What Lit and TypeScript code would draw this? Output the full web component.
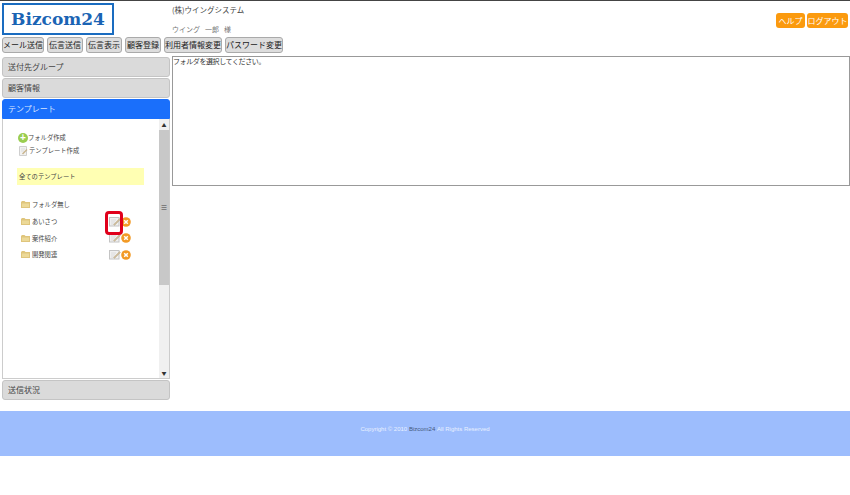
import { LitElement, html, css, svg } from "lit";
import { customElement } from "lit/decorators.js";

const folder = svg`<svg class="fd" viewBox="0 0 9 7" width="9" height="7"><path d="M0 1V7H9V1H4.5L3.5 0H1Z" fill="#dfc57c"/><rect x="1" y="2.5" width="7" height="3.5" fill="#ecd998"/></svg>`;
const edit = html`<svg class="ed" viewBox="0 0 12 10" width="12" height="10"><rect x=".5" y=".5" width="9.5" height="8.5" fill="#f0f0f0" stroke="#c4c4c4"/><path d="M2 3H7M2 5H6M2 7H5" stroke="#dcdcdc"/><path d="M4.5 7.5L10.5 1.5L11.5 2.5L5.5 8.5Z" fill="#cdbb98" stroke="#b5a78c" stroke-width=".4"/></svg>`;
const page = html`<svg class="pg" viewBox="0 0 9 10" width="9" height="10"><path d="M.5 .5H7.5V9.5H.5Z" fill="#f2f2f2" stroke="#cfcfcf"/><path d="M2 3H6M2 5H5" stroke="#ddd"/><path d="M3 7.5L7.5 3L8.5 4L4 8.5Z" fill="#c9b48c"/></svg>`;
const del = html`<svg class="dl" viewBox="0 0 10 10" width="10" height="10"><circle cx="5" cy="5" r="4.8" fill="#f29a26"/><path d="M3.2 3.2L6.8 6.8M6.8 3.2L3.2 6.8" stroke="#fff" stroke-width="1.5"/></svg>`;

@customElement("app-root")
export class AppRoot extends LitElement {
  static styles = css`
    :host { display: block; width: 850px; height: 495px; background: #fff; overflow: hidden;
      font-family: "Noto Sans CJK JP", "Liberation Sans", sans-serif; color: #333; font-size: 8px; }
    .page { height: 495px; border-top: 1px solid #444; box-sizing: border-box; display: flex; flex-direction: column; }
    header { height: 35px; display: flex; padding: 2px 0 0 2px; box-sizing: border-box; flex: none; }
    .logo { width: 112px; height: 32px; box-sizing: border-box; border: 2px solid #1a6cc0; display: flex; align-items: center; justify-content: center;
      font: bold 17px "DejaVu Serif", serif; color: #1a64b4; }
    .co { margin-left: 58px; display: flex; flex-direction: column; gap: 9px; padding-top: 1px; flex: 1; }
    .co div { line-height: 11px; font-size: 7.5px; color: #444; }
    .co .u { color: #777; font-size: 7px; display: flex; gap: 5px; }
    .top { display: flex; gap: 2px; padding: 10px 2px 0 0; align-items: flex-start; }
    .top span { background: #fb9a0e; color: #fff; border-radius: 3px; height: 15px; line-height: 15px; padding: 0 2.5px; font-size: 8px; white-space: nowrap; }
    .top span + span { padding: 0 .5px; }
    nav { display: flex; gap: 3px; padding-left: 2px; height: 16px; flex: none; margin-top: 1px; }
    nav span { background: #ddd; border: 1px solid #aaa; border-radius: 3px; min-width: 36px; box-sizing: border-box; text-align: center; line-height: 14px; font-size: 8px; color: #222; white-space: nowrap; }
    .body { display: flex; margin-top: 3px; height: 345px; flex: none; padding-left: 2px; }
    .side { width: 168px; flex: none; display: flex; flex-direction: column; margin-top: 1px; }
    .h { height: 20px; box-sizing: border-box; background: #dadada; border: 1px solid #c4c4c4; border-radius: 3px; line-height: 18px; padding-left: 5px; font-size: 8px; color: #444; margin-bottom: 1px; flex: none; }
    .h.on { background: #1a6ffb; color: #d8e6ff; border-color: #1a6ffb; border-radius: 3px 3px 0 0; margin-bottom: 0; }
    .panel { height: 260px; flex: none; margin-bottom: 1px; box-sizing: border-box; border: 1px solid #ccc; border-top: 0; display: flex; }
    .list { flex: 1; padding: 12px 0 0 15px; position: relative; font-size: 6.3px; color: #444; }
    .act { display: flex; align-items: center; height: 13px; gap: 0; }
    .pg { margin-left: 1px; margin-right: 1px; }
    .plus { width: 10px; height: 10px; border-radius: 50%; background: #9acd50; color: #fff; font: bold 10px/10px "Liberation Sans", sans-serif; text-align: center; }
    .all { margin-top: 11px; width: 127px; height: 17px; line-height: 17px; background: #ffffb3; padding-left: 2px; box-sizing: border-box; margin-left: -1px; }
    .folders { margin-top: 11.5px; margin-left: 3px; }
    .row { display: flex; align-items: center; height: 16.7px; width: 110px; }
    .row .fd { margin-right: 2px; flex: none; }
    .row .t { flex: 1; }
    .mark { position: absolute; left: 102px; top: 92px; width: 18px; height: 24px; box-sizing: border-box; border: 3px solid #e0001b; border-radius: 4px; }
    .sb { width: 10px; flex: none; background: #f0f0f0; display: flex; flex-direction: column; align-items: center; font-size: 5px; line-height: 11px; color: #333; }
    .sb i { font-style: normal; height: 11px; flex: none; }
    .thumb { width: 100%; height: 155px; background: #c8c8c8; flex: none; display: flex; align-items: center; justify-content: center; font-size: 7px; color: #444; }
    .grow { flex: 1; }
    main { margin-left: 2px; flex: 1; height: 130px; box-sizing: border-box; border: 1px solid #999; font-size: 7px; letter-spacing: -.4px; line-height: 9px; color: #333; }
    footer { margin-top: 10px; height: 45px; background: #9dbdfd; color: #e8f0ff; font: 6px "Liberation Sans", sans-serif; display: flex; align-items: center; justify-content: center; flex: none; padding-bottom: 10px; box-sizing: border-box; }
    footer b { font-weight: normal; color: #45587a; }
  `;
  render() {
    return html`<div class="page">
      <header>
        <div class="logo">Bizcom24</div>
        <div class="co"><div>(株)ウイングシステム</div><div class="u"><span>ウイング</span><span>一郎</span><span>様</span></div></div>
        <div class="top"><span>ヘルプ</span><span>ログアウト</span></div>
      </header>
      <nav>${["メール送信","伝言送信","伝言表示","顧客登録","利用者情報変更","パスワード変更"].map(t => html`<span>${t}</span>`)}</nav>
      <div class="body">
        <div class="side">
          <div class="h">送付先グループ</div>
          <div class="h">顧客情報</div>
          <div class="h on">テンプレート</div>
          <div class="panel">
            <div class="list">
              <div class="act"><span class="plus">+</span>フォルダ作成</div>
              <div class="act">${page}テンプレート作成</div>
              <div class="all">全てのテンプレート</div>
              <div class="folders">
                ${["フォルダ無し","あいさつ","案件紹介","開発関連"].map((t,i) => html`<div class="row">${folder}<span class="t">${t}</span>${i ? html`${edit}${del}` : ""}</div>`)}
              </div>
              <div class="mark"></div>
            </div>
            <div class="sb"><i>▲</i><div class="thumb">≡</div><div class="grow"></div><i>▼</i></div>
          </div>
          <div class="h">送信状況</div>
        </div>
        <main>フォルダを選択してください。</main>
      </div>
      <footer>Copyright © 2010&nbsp;<b>Bizcom24</b>&nbsp;All Rights Reserved</footer>
    </div>`;
  }
}
